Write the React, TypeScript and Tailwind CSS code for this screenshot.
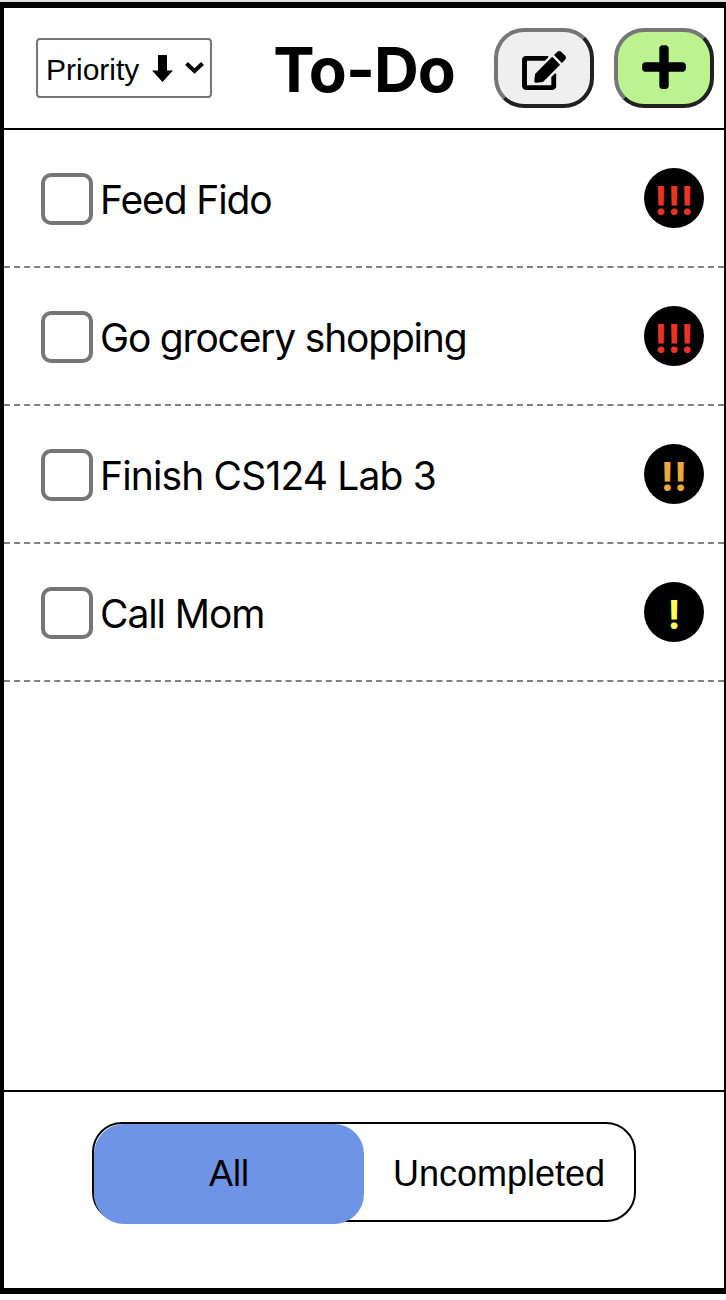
import { useState } from "react";
import { FaEdit, FaPlus } from "react-icons/fa";

type Task = { id: number; label: string; marks: string; tone: string; spacing: string };

const tasks: Task[] = [
  { id: 1, label: "Feed Fido", marks: "!!!", tone: "text-[#e93423]", spacing: "tracking-[-1.1px]" },
  { id: 2, label: "Go grocery shopping", marks: "!!!", tone: "text-[#e93423]", spacing: "tracking-[-1.2px]" },
  { id: 3, label: "Finish CS124 Lab 3", marks: "!!", tone: "text-[#f0a73a]", spacing: "tracking-[-0.85px]" },
  { id: 4, label: "Call Mom", marks: "!", tone: "text-[#fffd54]", spacing: "tracking-[-1.1px]" },
];

const bevel =
  "flex h-20 w-[100px] items-center justify-center rounded-[30px] border-4 border-t-[#767676] border-l-[#767676] border-r-[#212121] border-b-[#212121]";

function SortPicker() {
  return (
    <button className="flex h-[60px] w-44 items-center rounded-[4px] border-2 border-[#767676] bg-white pl-2 font-['Liberation_Sans',Arial,sans-serif] text-[30px] leading-none">
      <span className="pt-[3px]">Priority</span>
      <svg className="ml-[13px] h-[27px] w-[21px]" viewBox="0 0 21 27">
        <path d="M6 0h9v15.500h6L10.500 27 0 15.500h6z" />
      </svg>
      <svg className="ml-3 h-3 w-[19px]" viewBox="0 0 19 12" fill="none" stroke="black" strokeWidth="4">
        <path d="M1.500 1.500 9.500 9l8-7.500" />
      </svg>
    </button>
  );
}

function TaskRow({ task }: { task: Task }) {
  const [done, setDone] = useState(false);
  return (
    <li className="flex h-[138px] items-center border-b-2 border-dashed border-[#808080] pr-5 pl-[37px]">
      <input
        type="checkbox"
        checked={done}
        onChange={() => setDone(!done)}
        className="mt-0.5 size-[52px] appearance-none rounded-[10px] border-4 border-[#767676] bg-white checked:bg-[#767676]"
      />
      <span className={`mt-0.5 ml-[7px] flex-1 text-[39px] leading-none ${task.spacing}`}>{task.label}</span>
      <span
        className={`flex size-[60px] items-center justify-center rounded-full bg-black pt-1 text-[39px] leading-none font-bold ${task.tone}`}
      >
        {task.marks}
      </span>
    </li>
  );
}

export default function App() {
  return (
    <div className="h-[1300px] w-[726px] bg-white font-[Inter,sans-serif] text-black">
      <div className="h-0.5 bg-[#e0e1e2]" />
      <div className="flex h-[1292px] flex-col border-y-[6px] border-r-2 border-l-4 border-black">
        <header className="flex h-[122px] items-center border-b-2 border-black pr-2.5 pl-8">
          <SortPicker />
          <h1 className="flex-1 pt-1 pl-[22px] text-center text-[62px] leading-none font-bold tracking-[-1px]">To-Do</h1>
          <div className="flex gap-5">
            <button aria-label="Edit" className={`${bevel} bg-[#efefef]`}>
              <FaEdit className="mt-1 h-[39px] w-11" />
            </button>
            <button aria-label="Add" className={`${bevel} bg-[#bbf48f]`}>
              <FaPlus className="h-[50px] w-11 -translate-y-px" />
            </button>
          </div>
        </header>
        <ul className="flex-1">
          {tasks.map((task) => (
            <TaskRow key={task.id} task={task} />
          ))}
        </ul>
        <footer className="h-[198px] border-t-2 border-black pt-[30px] pl-[88px]">
          <div className="flex h-[100px] w-[544px] rounded-[30px] border-2 border-black font-['Liberation_Sans',Arial,sans-serif] text-[36px] leading-none">
            <button className="h-[100px] w-[270px] rounded-[30px] bg-[#6e95e5]">All</button>
            <button className="h-[100px] w-[270px]">Uncompleted</button>
          </div>
        </footer>
      </div>
    </div>
  );
}
